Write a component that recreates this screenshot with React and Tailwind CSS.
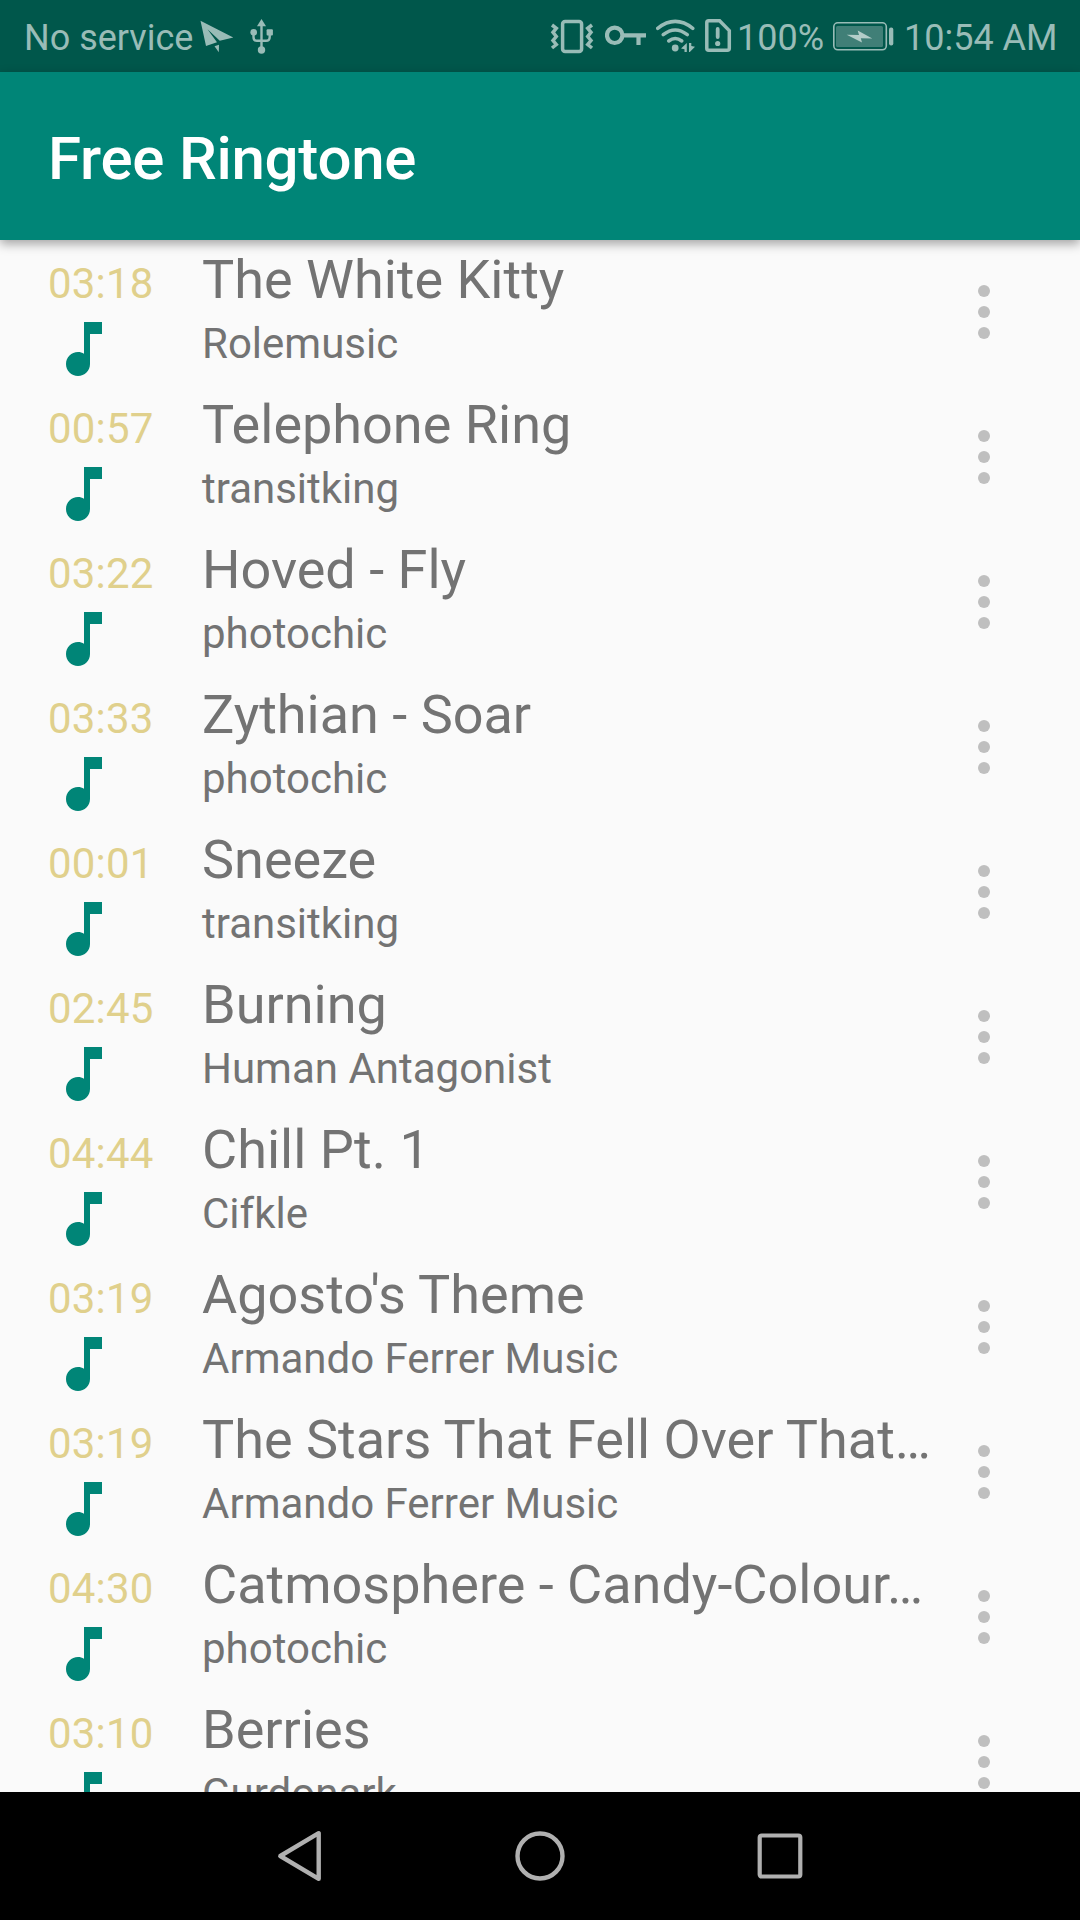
import React from "react";

const tracks = [
  { time: "03:18", title: "The White Kitty", artist: "Rolemusic" },
  { time: "00:57", title: "Telephone Ring", artist: "transitking" },
  { time: "03:22", title: "Hoved - Fly", artist: "photochic" },
  { time: "03:33", title: "Zythian - Soar", artist: "photochic" },
  { time: "00:01", title: "Sneeze", artist: "transitking" },
  { time: "02:45", title: "Burning", artist: "Human Antagonist" },
  { time: "04:44", title: "Chill Pt. 1", artist: "Cifkle" },
  { time: "03:19", title: "Agosto's Theme", artist: "Armando Ferrer Music" },
  { time: "03:19", title: "The Stars That Fell Over That…", artist: "Armando Ferrer Music" },
  { time: "04:30", title: "Catmosphere - Candy-Colour…", artist: "photochic" },
  { time: "03:10", title: "Berries", artist: "Gurdonark" },
];

function PlaneIcon() {
  return (
    <svg className="w-[34px] h-[72px]" viewBox="200 0 34 72" fill="currentColor">
      <path d="M200.5 20.7L233.3 37.5L219.8 40.8L207.5 29.3L217 42.3L206 46Z" />
      <path d="M214.5 46.3L219 44.8L218.8 52.3Z" />
    </svg>
  );
}

function UsbIcon() {
  return (
    <svg className="w-6 h-[72px]" viewBox="250 0 24 72" fill="currentColor">
      <path d="M261.5 19L266 26.3H257Z" />
      <path d="M261.5 25V48M253.5 33V37Q253.5 40.8 257 40.8H266Q269.7 40.8 269.7 37V33" fill="none" stroke="currentColor" strokeWidth="2.4" />
      <circle cx="253.7" cy="32.3" r="3.3" />
      <rect x="266.6" y="29.2" width="6.3" height="6.3" rx="1" />
      <circle cx="261.5" cy="50" r="3.7" />
    </svg>
  );
}

function VibrateIcon() {
  return (
    <svg className="w-[44px] h-[72px]" viewBox="550 0 44 72" fill="none" stroke="currentColor" strokeWidth="3.5">
      <rect x="562.6" y="21.6" width="19" height="29.8" rx="2.5" />
      <path d="M552 25L556.3 28.3L553 32.3L556.3 36.5L553 40.5L556.3 44.5L552 48" />
      <path d="M592 25L587.7 28.3L591 32.3L587.7 36.5L591 40.5L587.7 44.5L592 48" />
    </svg>
  );
}

function KeyIcon() {
  return (
    <svg className="w-[42px] h-[72px]" viewBox="605 0 42 72" fill="none" stroke="currentColor" strokeWidth="4.2">
      <circle cx="614.7" cy="35.3" r="7.7" />
      <path d="M622 35.3H646M638.5 35.3V45" />
    </svg>
  );
}

function WifiIcon() {
  return (
    <svg className="w-10 h-[72px]" viewBox="656 0 40 72" fill="currentColor">
      <g fill="none" stroke="currentColor" strokeWidth="3.5" strokeLinecap="round">
        <path d="M657.7 28.3Q675.2 14.5 692.8 28.3" />
        <path d="M663.2 34.7Q675.2 25.3 687.3 34.7" />
        <path d="M668.7 41Q675.2 36 681.8 41" />
      </g>
      <circle cx="675.2" cy="48" r="3.4" />
      <path d="M686.8 43V52H684.5V49.3L681 48.5Z" />
      <path d="M689 43H691.3V46L695 46.8L689.8 52H689Z" />
    </svg>
  );
}

function SimAlertIcon() {
  return (
    <svg className="w-[27px] h-[72px]" viewBox="705 0 27 72" fill="none" stroke="currentColor" strokeWidth="3.5">
      <path d="M708.7 20.7H719.6L729.3 30.6V48.3Q729.3 50.3 727.3 50.3H708.7Q706.8 50.3 706.8 48.3V22.7Q706.8 20.7 708.7 20.7Z" />
      <path d="M717.7 29V37" strokeWidth="3.8" strokeLinecap="round" />
      <circle cx="717.7" cy="43.5" r="2.6" fill="currentColor" stroke="none" />
    </svg>
  );
}

function BatteryIcon() {
  return (
    <svg className="w-[62px] h-[72px]" viewBox="832 0 62 72" fill="currentColor">
      <rect x="833.8" y="22.8" width="52.5" height="27" rx="4" fill="none" stroke="currentColor" strokeWidth="1.6" />
      <rect x="836" y="26" width="47" height="21" rx="1.5" fill="#407f77" />
      <rect x="889" y="27.5" width="4.3" height="18" rx="2" />
      <path d="M846.7 34.7L859 34.9L857.7 30.5L872.3 38.5L860.8 38.2L862 42.5Z" fill="#b3cdc9" />
    </svg>
  );
}

function StatusBar() {
  return (
    <header className="flex h-[72px] shrink-0 items-center justify-between bg-[#00574b] px-6 text-[36px] leading-[68px] text-[#99bcb7] whitespace-nowrap">
      <div className="flex items-center">
        <span className="w-[176px] pt-1">No service</span>
        <PlaneIcon />
        <span className="w-4" />
        <UsbIcon />
      </div>
      <div className="flex items-center">
        <VibrateIcon />
        <span className="w-[11px]" />
        <KeyIcon />
        <span className="w-[9px]" />
        <WifiIcon />
        <span className="w-[9px]" />
        <SimAlertIcon />
        <span className="w-[100px] pl-[5px] pt-1">100%</span>
        <BatteryIcon />
        <span className="w-[162px] pl-[10px] pt-1">10:54 AM</span>
      </div>
    </header>
  );
}

function Track({ time, title, artist }) {
  return (
    <li className="flex h-[145px] shrink-0 pl-12">
      <div className="w-[154px] pt-3">
        <div className="text-[42px] leading-[56px] tracking-[0.2px] text-[#e0d08c]">{time}</div>
        <svg className="mt-px size-[72px]" viewBox="0 0 24 24" fill="#008577">
          <path d="M12 3v10.55c-.59-.34-1.27-.55-2-.55-2.21 0-4 1.79-4 4s1.79 4 4 4 4-1.79 4-4V7h4V3h-6z" />
        </svg>
      </div>
      <div className="w-[752px] text-[#737373] whitespace-nowrap">
        <div className="text-[54px] leading-[72px]">{title}</div>
        <div className="text-[42px] leading-[56px]">{artist}</div>
      </div>
      <svg className="mt-8 h-[72px] w-[60px]" viewBox="0 0 60 72" fill="#bfbfbf">
        <circle cx="30" cy="15" r="6" />
        <circle cx="30" cy="36" r="6" />
        <circle cx="30" cy="57" r="6" />
      </svg>
    </li>
  );
}

function NavBar() {
  return (
    <nav className="flex h-32 shrink-0 items-center justify-center gap-[180px] bg-black">
      <svg className="size-[60px]" viewBox="0 0 60 60" fill="none" stroke="#b0b0b0" strokeWidth="4.4" strokeLinejoin="round">
        <path d="M10.3 30L48.7 7.2V52.8Z" />
      </svg>
      <svg className="size-[60px]" viewBox="0 0 60 60" fill="none" stroke="#b0b0b0" strokeWidth="4.4">
        <circle cx="30" cy="30" r="22.5" />
      </svg>
      <svg className="size-[60px]" viewBox="0 0 60 60" fill="none" stroke="#b0b0b0" strokeWidth="4.2">
        <rect x="9.7" y="9.5" width="40.6" height="41" rx="2" />
      </svg>
    </nav>
  );
}

export default function App() {
  return (
    <div className="flex h-[1920px] w-[1080px] flex-col overflow-hidden bg-[#fafafa] font-[Roboto,sans-serif]">
      <StatusBar />
      <div className="relative z-10 flex h-[168px] shrink-0 items-center bg-[#008577] pl-12 pt-[5px] shadow-[0_4px_10px_rgba(0,0,0,0.35)]">
        <h1 className="text-[60px] font-medium leading-[80px] tracking-[-0.25px] text-white">Free Ringtone</h1>
      </div>
      <ul className="flex min-h-0 flex-1 flex-col overflow-hidden pt-1">
        {tracks.map((track, i) => (
          <Track key={i} {...track} />
        ))}
      </ul>
      <NavBar />
    </div>
  );
}
